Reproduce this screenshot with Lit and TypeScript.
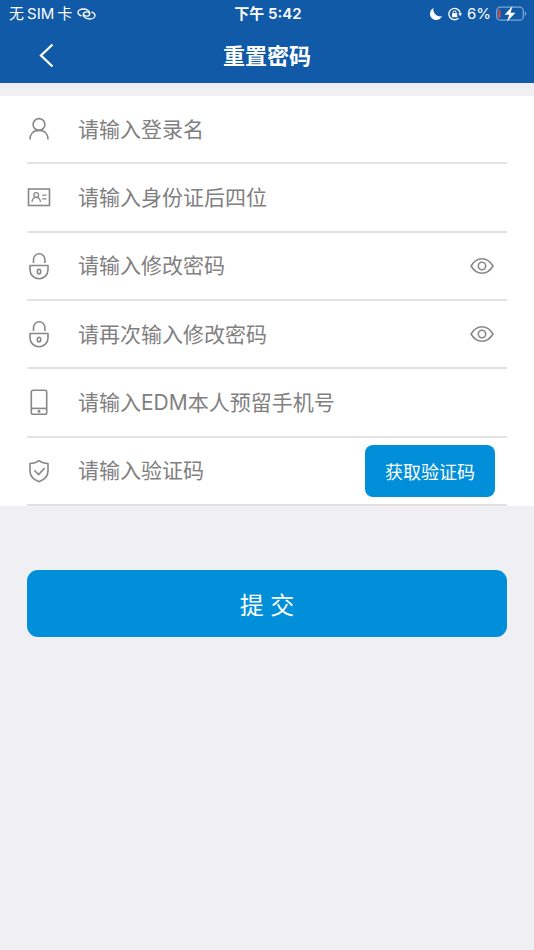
import { LitElement, html, css, svg, nothing, type TemplateResult } from "lit";
import { customElement, state } from "lit/decorators.js";

interface Field {
  id: string;
  hint: string;
  type: string;
  icon: TemplateResult;
  code?: boolean;
}

const icons = {
  user: svg`
    <circle cx="14" cy="9.500" r="5.900"/>
    <path d="M5 24.500c0-5.300 3-9.100 9-9.100s9 3.800 9 9.100"/>`,
  card: svg`
    <rect x="3.500" y="6" width="21" height="16.500"/>
    <g stroke-width="1.300">
      <circle cx="11.200" cy="12" r="2.400"/>
      <path d="M7 19c.2-3 1.800-4.600 4.200-4.600s4 1.600 4.200 4.600M17.200 12.200h4.300M17.200 15.800h4.300"/>
    </g>`,
  lock: svg`
    <path d="M8.500 11V7.500a5.700 5.700 0 0 1 11.400 0V11"/>
    <path d="M5 13.500h18v4.300a9 9 0 0 1-18 0z" stroke-linejoin="round"/>
    <ellipse cx="14" cy="19.600" rx="1.700" ry="2.400"/>`,
  phone: svg`
    <rect x="6.300" y="2.300" width="15.400" height="24" rx="1.800"/>
    <path d="M6.300 20.400h15.400"/>
    <circle cx="14" cy="23.300" r=".7" fill="currentColor"/>`,
  shield: svg`
    <path d="M14 3.500c2.400 2 5.400 3 9 3V14c0 5-4 8.800-9 10.800C9 22.800 5 19 5 14V6.500c3.600 0 6.600-1 9-3z" stroke-linejoin="round"/>
    <path d="M9.300 13.200l4.300 4.400 6-6.500"/>`,
};

const fields: Field[] = [
  { id: "login", hint: "请输入登录名", type: "text", icon: icons.user },
  { id: "idcard", hint: "请输入身份证后四位", type: "text", icon: icons.card },
  { id: "password", hint: "请输入修改密码", type: "password", icon: icons.lock },
  { id: "confirm", hint: "请再次输入修改密码", type: "password", icon: icons.lock },
  { id: "phone", hint: "请输入EDM本人预留手机号", type: "tel", icon: icons.phone },
  { id: "code", hint: "请输入验证码", type: "text", icon: icons.shield, code: true },
];

@customElement("app-root")
export class AppRoot extends LitElement {
  @state() private shown: string[] = [];

  static styles = css`
    :host {
      display: block;
      min-height: 100vh;
      background: #efeff4;
      font-family: Inter, "Noto Sans CJK SC", sans-serif;
    }
    * {
      box-sizing: border-box;
    }
    svg {
      display: block;
      fill: none;
      stroke: currentColor;
      stroke-width: 1.6;
      flex: none;
    }
    button,
    input {
      font: inherit;
      border: 0;
      padding: 0;
      margin: 0;
      background: none;
    }
    button {
      cursor: pointer;
    }
    .top {
      background: #115aa8;
      color: #fff;
    }
    .status {
      display: grid;
      grid-template-columns: 1fr auto 1fr;
      align-items: center;
      height: 28px;
      padding: 0 7px 0 9px;
      font-size: 15px;
      line-height: 28px;
    }
    .carrier,
    .indicators {
      display: flex;
      align-items: center;
      gap: 5px;
    }
    .network {
      display: flex;
      gap: 3px;
    }
    .indicators {
      justify-content: flex-end;
    }
    .time {
      font-weight: 600;
    }
    .nav {
      display: grid;
      grid-template-columns: 40px 1fr 40px;
      align-items: center;
      height: 55px;
      padding: 0 27px;
    }
    .back {
      display: flex;
      align-items: center;
      justify-content: center;
      height: 40px;
      color: inherit;
    }
    .title {
      margin: 0;
      text-align: center;
      font-size: 22px;
      line-height: 30px;
      font-weight: 600;
    }
    .fields {
      display: grid;
      grid-auto-rows: 1fr;
      min-height: 410px;
      margin-top: 13px;
      padding: 0 27px;
      background: #fff;
    }
    .row {
      display: flex;
      align-items: center;
      padding-right: 12px;
      border-bottom: 2px solid #e2e2e4;
    }
    .icon {
      width: 51px;
      color: #888;
    }
    .input {
      flex: 1;
      min-width: 0;
      height: 40px;
      font-size: 21px;
      color: #333;
      outline: none;
    }
    .input::placeholder {
      color: #808080;
      opacity: 1;
    }
    .eye {
      color: #888;
    }
    .send {
      height: 52px;
      padding: 0 20px;
      border-radius: 8px;
      background: #008fd8;
      color: #fff;
      font-size: 18px;
    }
    .actions {
      padding: 64px 27px;
    }
    .submit {
      display: block;
      width: 100%;
      height: 67px;
      border-radius: 11px;
      background: #008fd8;
      color: #fff;
      font-size: 24px;
    }
  `;

  private toggle(id: string) {
    this.shown = this.shown.includes(id)
      ? this.shown.filter((x) => x !== id)
      : [...this.shown, id];
  }

  private renderStatus() {
    return html`
      <div class="status">
        <div class="carrier">
          <div class="network"><span>无</span><span>SIM</span><span>卡</span></div>
          <svg width="19" height="14" viewBox="0 0 19 14" aria-hidden="true">
            <g stroke-width="1.300" stroke-linecap="round">
              <path d="M4.200 8.800C2.300 8.200 1 7 1 5.500c0-2 2.300-3.500 5.300-3.500 3.400 0 6.500 1.800 6.500 4.200 0 1.700-1.500 3-3.400 3-1.600 0-2.900-.8-2.900-2.100"/>
              <path d="M14.800 5.200c1.900.6 3.200 1.800 3.200 3.300 0 2-2.300 3.500-5.300 3.500-3.400 0-6.500-1.800-6.500-4.200 0-1.700 1.500-3 3.400-3 1.600 0 2.900.8 2.900 2.100"/>
            </g>
          </svg>
        </div>
        <span class="time">下午 5:42</span>
        <div class="indicators">
          <svg width="14" height="14" viewBox="0 0 14 14" aria-hidden="true">
            <path d="M4.500 1C3.500 5.800 7.500 10 13 9.300 11.900 11.600 9.700 13 7.300 13 3.900 13 1 10.400 1 7c0-2.600 1.300-4.900 3.500-6z" fill="currentColor" stroke="none"/>
          </svg>
          <svg width="14" height="14" viewBox="0 0 14 14" aria-hidden="true">
            <path d="M12.200 6A5.700 5.700 0 1 0 10.500 11.200" stroke-width="1.300"/>
            <path d="M10.300 6.200H14l-1.800 3z" fill="currentColor" stroke="none"/>
            <rect x="4" y="6.200" width="5.200" height="4" rx=".5" fill="currentColor" stroke="none"/>
            <path d="M5.200 6.500V5.200a1.400 1.400 0 0 1 2.800 0v1.300" stroke-width="1"/>
          </svg>
          <span>6%</span>
          <svg width="31" height="16" viewBox="0 0 31 16" aria-hidden="true">
            <rect x=".7" y="1.200" width="26.600" height="13" rx="3.800" stroke="#7ea6d1" stroke-width="1.300"/>
            <path d="M28.800 5.300c2 .8 2 4 0 4.800z" fill="#7ea6d1" stroke="none"/>
            <rect x="2.500" y="3.500" width="2" height="8.400" rx="1" fill="#f0443c" stroke="none"/>
            <path d="M16.500 0L8.500 8.700h4.700L11 15.500 19.500 6.800h-4.900z" fill="#fff" stroke="none"/>
          </svg>
        </div>
      </div>
    `;
  }

  private renderField(f: Field) {
    const secret = f.type === "password";
    const open = this.shown.includes(f.id);
    return html`
      <div class="row">
        <label class="icon" for=${f.id} aria-label=${f.hint}>
          <svg width="24" height="28" viewBox="2 0 24 28" aria-hidden="true">${f.icon}</svg>
        </label>
        <input
          class="input"
          id=${f.id}
          type=${secret && open ? "text" : f.type}
          placeholder=${f.hint}
        />
        ${secret
          ? html`<button
              class="eye"
              type="button"
              aria-label="显示密码"
              aria-pressed=${open}
              @click=${() => this.toggle(f.id)}
            >
              <svg width="26" height="20" viewBox="0 0 26 20" aria-hidden="true">
                <path d="M2 10c2.800-4.700 6.500-7.200 11-7.200s8.200 2.500 11 7.200c-2.800 4.700-6.500 7.200-11 7.200S4.800 14.700 2 10z" stroke-linejoin="round"/>
                <circle cx="13" cy="10" r="3.700"/>
              </svg>
            </button>`
          : nothing}
        ${f.code ? html`<button class="send" type="button">获取验证码</button>` : nothing}
      </div>
    `;
  }

  render() {
    return html`
      <header class="top">
        ${this.renderStatus()}
        <div class="nav">
          <button class="back" type="button" aria-label="返回">
            <svg width="16" height="26" viewBox="0 0 16 26" aria-hidden="true">
              <path d="M13.500 1.500L2 12.500l11.500 11" stroke-width="2.300"/>
            </svg>
          </button>
          <h1 class="title">重置密码</h1>
        </div>
      </header>
      <form @submit=${(e: Event) => e.preventDefault()}>
        <div class="fields">${fields.map((f) => this.renderField(f))}</div>
        <div class="actions">
          <button class="submit" type="submit">提 交</button>
        </div>
      </form>
    `;
  }
}
